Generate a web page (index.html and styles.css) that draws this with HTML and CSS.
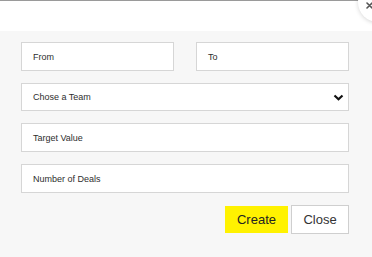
FILE: index.html
```html
<!DOCTYPE html>
<html>
<head>
<meta charset="utf-8">
<link rel="stylesheet" href="styles.css">
</head>
<body>
<div class="modal">
  <div class="header"></div>
  <button class="dismiss" aria-label="close">
    <svg width="7" height="7" viewBox="0 0 7 7"><path d="M1 1L6 6M6 1L1 6" stroke="#555" stroke-width="1.6" stroke-linecap="round"/></svg>
  </button>
  <div class="body">
    <div class="row two">
      <div class="field">From</div>
      <div class="field">To</div>
    </div>
    <div class="row">
      <div class="field select">Chose a Team
        <svg class="chev" width="11" height="7" viewBox="0 0 11 7"><path d="M1.5 1.5L5.5 5.2L9.5 1.5" fill="none" stroke="#111" stroke-width="2.2"/></svg>
      </div>
    </div>
    <div class="row"><div class="field">Target Value</div></div>
    <div class="row"><div class="field">Number of Deals</div></div>
    <div class="actions">
      <button class="btn create">Create</button>
      <button class="btn close">Close</button>
    </div>
  </div>
</div>
</body>
</html>
```

FILE: styles.css
```css
html, body {
  margin: 0;
  padding: 0;
  width: 372px;
  height: 257px;
  overflow: hidden;
  background: #f7f7f7;
  font-family: "Liberation Sans", Arial, sans-serif;
}
.modal {
  position: relative;
  width: 372px;
  height: 257px;
  overflow: hidden;
}
.header {
  height: 30px;
  background: #fff;
  border-top: 1px solid #9a9a9a;
}
.dismiss {
  position: absolute;
  left: 358px;
  top: -18px;
  width: 40px;
  height: 40px;
  border-radius: 50%;
  border: none;
  background: #fff;
  box-shadow: 0 1px 4px rgba(0,0,0,0.16);
  padding: 0;
}
.dismiss svg {
  position: absolute;
  left: 8px;
  top: 20px;
}
.body {
  background: #f7f7f7;
  padding: 11px 23px 0 21px;
  display: flex;
  flex-direction: column;
}
.row {
  display: flex;
  margin-bottom: 12px;
}
.row.two {
  gap: 22px;
}
.field {
  flex: 1;
  height: 27px;
  box-sizing: content-box;
  background: #fff;
  border: 1px solid #d6d6d6;
  font-size: 9px;
  color: #2e2e2e;
  display: flex;
  align-items: center;
  padding-left: 11px;
}
.select {
  position: relative;
  justify-content: space-between;
  padding-right: 4px;
  height: 26px;
}
.actions {
  display: flex;
  justify-content: flex-end;
  align-items: center;
  gap: 3px;
}
.btn {
  font-family: "Liberation Sans", Arial, sans-serif;
  font-size: 13px;
  color: #222;
  padding: 0;
  cursor: pointer;
}
.create {
  width: 63px;
  height: 27px;
  background: #fff200;
  border: none;
}
.close {
  width: 58px;
  height: 29px;
  background: #fff;
  border: 1px solid #cfcfcf;
  color: #333;
}
```
